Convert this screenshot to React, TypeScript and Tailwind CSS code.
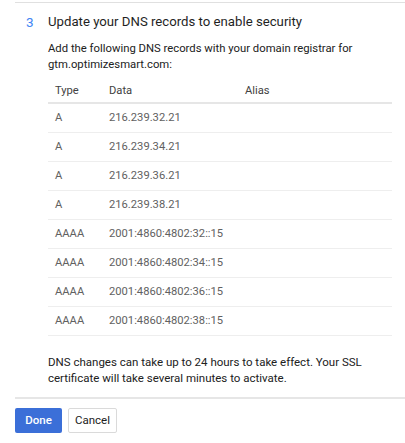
import React from "react";

const records = [
  { type: "A", data: "216.239.32.21" },
  { type: "A", data: "216.239.34.21" },
  { type: "A", data: "216.239.36.21" },
  { type: "A", data: "216.239.38.21" },
  { type: "AAAA", data: "2001:4860:4802:32::15" },
  { type: "AAAA", data: "2001:4860:4802:34::15" },
  { type: "AAAA", data: "2001:4860:4802:36::15" },
  { type: "AAAA", data: "2001:4860:4802:38::15" },
];

function App() {
  return (
    <div className="bg-white min-h-screen pl-[15px] pt-[2px] font-['Roboto',_'Liberation_Sans',_sans-serif]">
      <div className="border-t border-[#e0e0e0]">
        <div className="flex">
          <div className="w-[33px] pl-[11px] mt-[9px] text-[13.5px] leading-[20px] text-[#4285f4]">
            3
          </div>
          <div className="flex-1 pr-[13px]">
            <h2 className="mt-[9px] text-[13.2px] leading-[20px] text-[#1f1f1f]">
              Update your DNS records to enable security
            </h2>
            <p className="mt-[9px] text-[11.3px] leading-[16px] text-[#212121]">
              Add the following DNS records with your domain registrar for
              <br />
              gtm.optimizesmart.com:
            </p>

            <div className="mt-[8px] text-[11.2px]">
              <div className="grid grid-cols-[54px_136px_1fr] h-[23px] items-center border-b-2 border-[#e6e6e6] text-[#424242]">
                <div className="pl-[7px]">Type</div>
                <div className="pl-[7px]">Data</div>
                <div className="pl-[7px]">Alias</div>
              </div>
              {records.map((r) => (
                <div
                  key={r.data}
                  className="grid grid-cols-[54px_136px_1fr] h-[29px] items-center border-b border-[#eeeeee] text-[#616161]"
                >
                  <div className="pl-[7px]">{r.type}</div>
                  <div className="pl-[7px]">{r.data}</div>
                  <div className="pl-[7px]"></div>
                </div>
              ))}
            </div>

            <p className="mt-[18px] text-[11.5px] leading-[16px] text-[#212121]">
              DNS changes can take up to 24 hours to take effect. Your SSL
              <br />
              certificate will take several minutes to activate.
            </p>
          </div>
        </div>
      </div>

      <div className="mt-[11px] border-t-2 border-[#e6e6e6] pt-[9px] flex gap-[6px]">
        <button className="w-[47px] h-[25px] rounded-[2px] bg-[#3b6fd8] text-white text-[11.5px] font-medium">
          Done
        </button>
        <button className="w-[49px] h-[25px] rounded-[2px] bg-white border border-[#dadada] text-[#212121] text-[11.5px]">
          Cancel
        </button>
      </div>
    </div>
  );
}

export default App;
